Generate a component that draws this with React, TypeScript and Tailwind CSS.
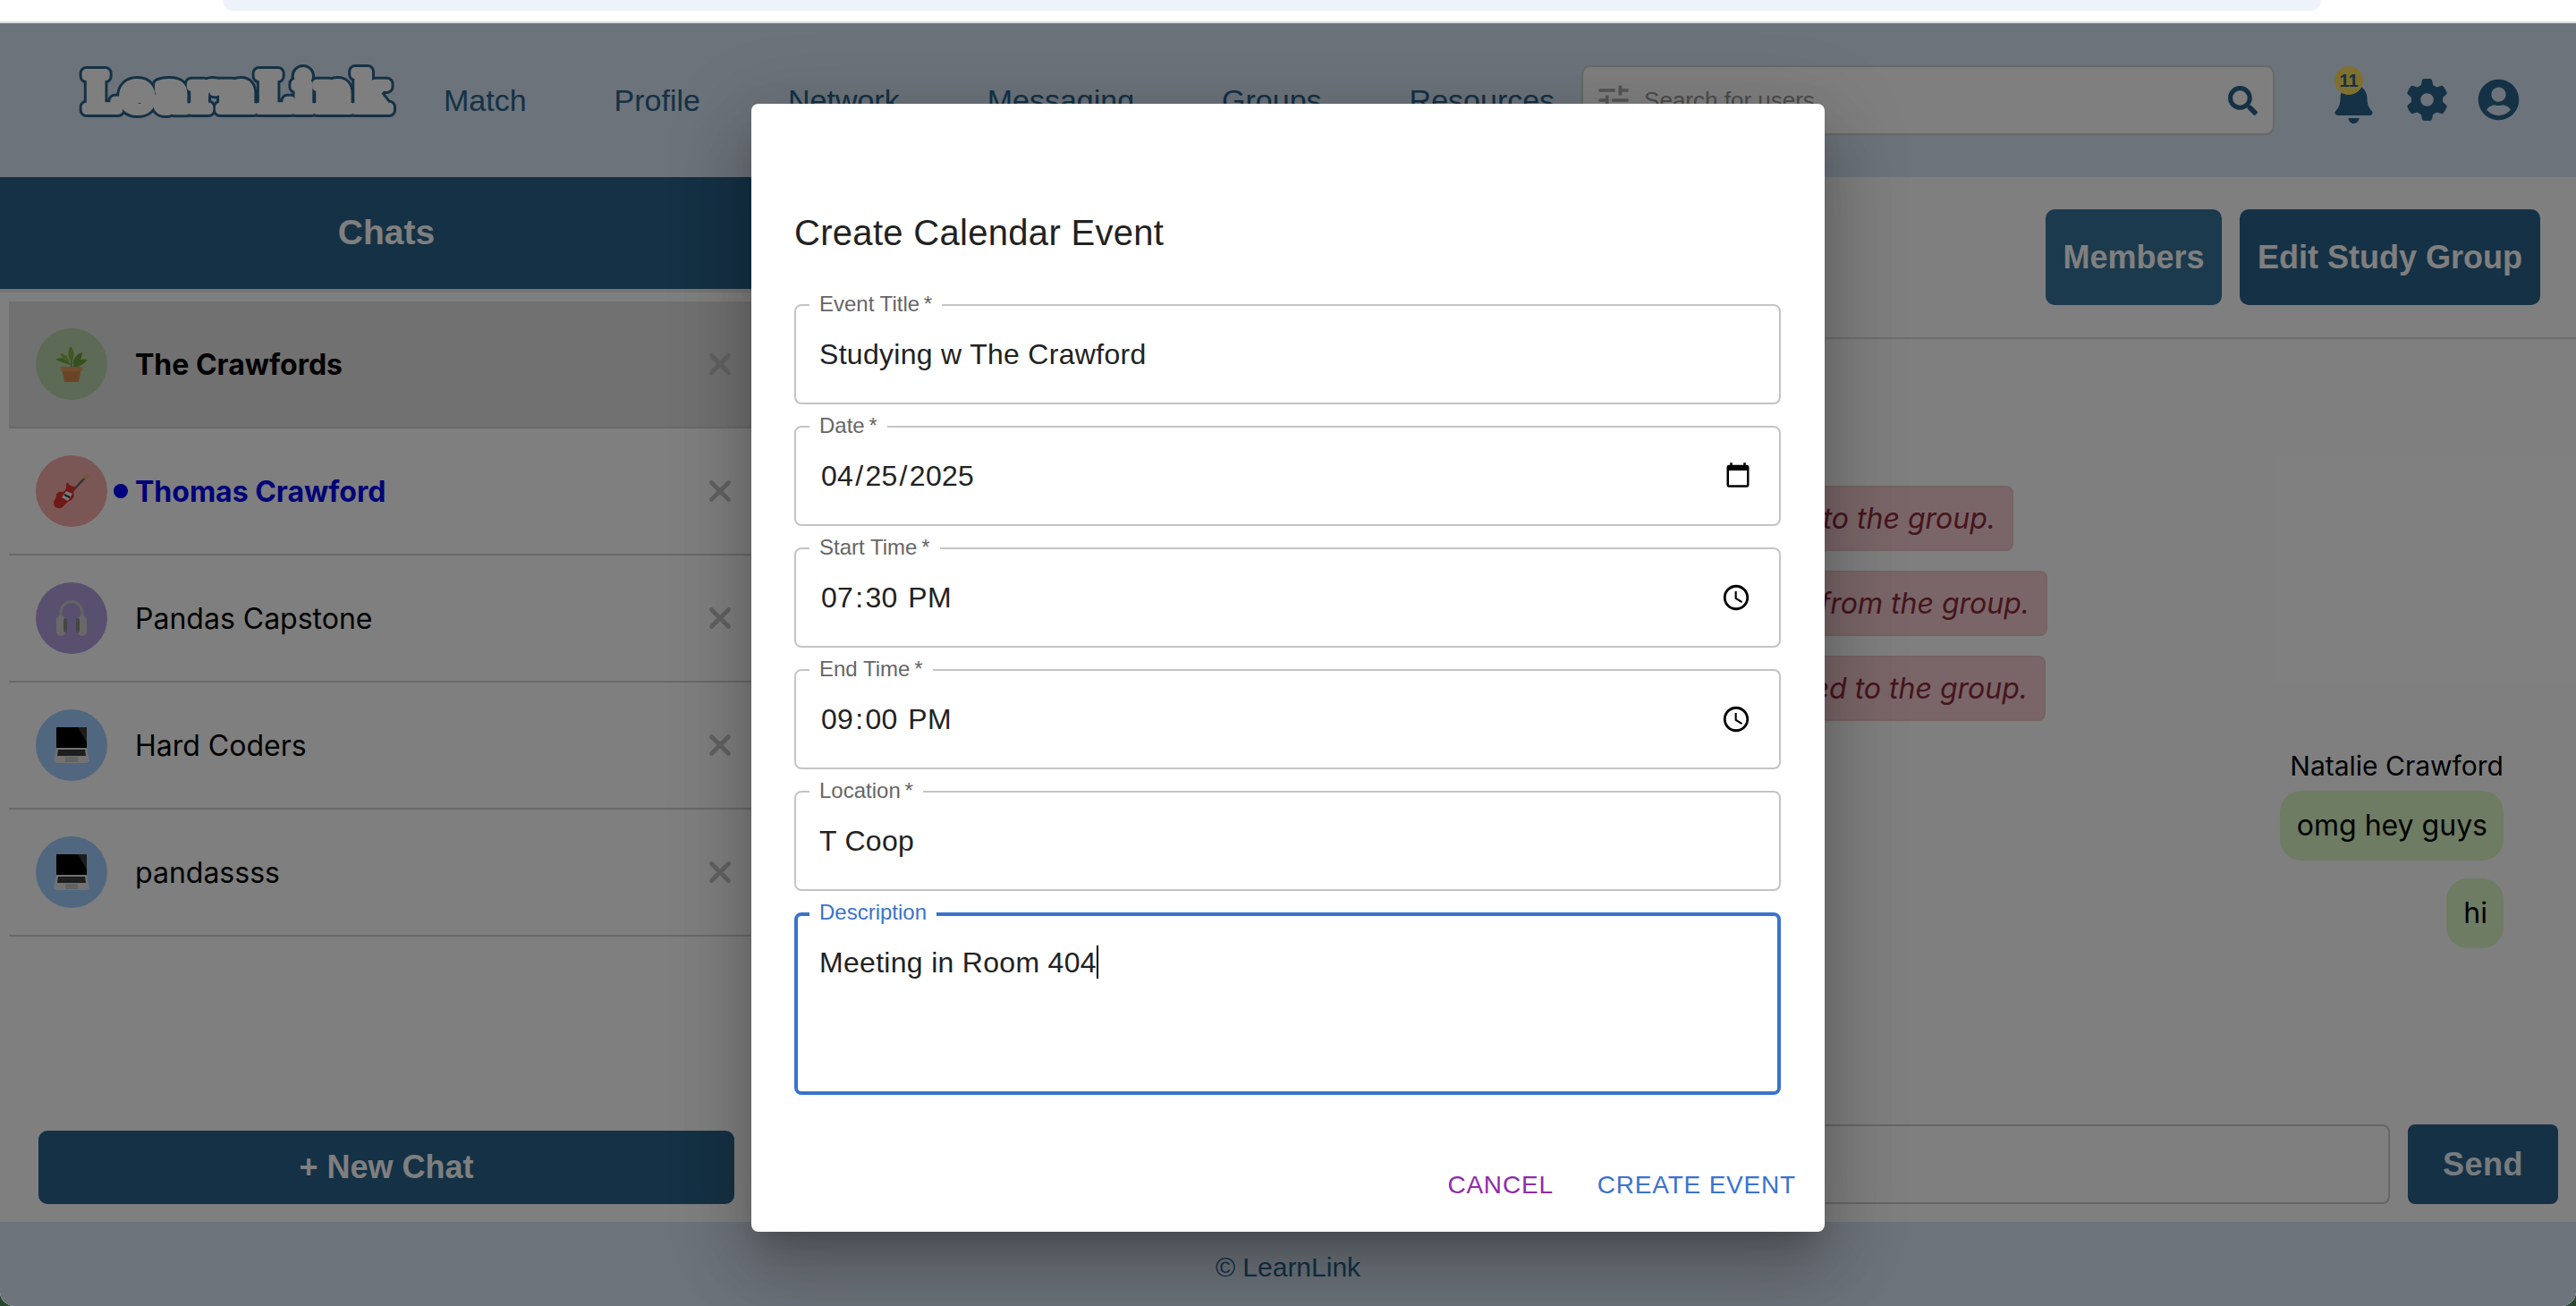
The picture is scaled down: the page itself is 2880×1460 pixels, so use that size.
import { FaBell, FaSearch, FaUserCircle } from "react-icons/fa";
import { FaGear } from "react-icons/fa6";
import { MdTune } from "react-icons/md";
import { X } from "lucide-react";

const NAV_ITEMS = ["Match", "Profile", "Network", "Messaging", "Groups", "Resources"];

const PlantIcon = () => (
  <svg viewBox="0 0 36 40" className="h-[40px] w-[36px]">
    <path d="M18 25 C17 18 18 12 19 6" stroke="#4f7a2b" strokeWidth="1.2" fill="none" />
    <path d="M18 17 C13 14 14 5 17 0 C21 5 22 12 18 17Z" fill="#7fae46" />
    <path d="M19 20 C20 13 25 8 30 7 C30 14 26 19 19 20Z" fill="#6f9f3c" />
    <path d="M17 21 C12 20 7 18 0 15 C6 11 14 14 17 21Z" fill="#77a53f" />
    <path d="M19 24 C24 24 31 21 36 15 C28 13 21 17 19 24Z" fill="#6f9f3c" />
    <path d="M16 19 C11 17 7 12 5 8 C11 8 15 13 16 19Z" fill="#86b84c" />
    <path d="M7 24 H29 L26 40 H10Z" fill="#d48a4b" />
    <rect x="6" y="23" width="24" height="5" rx="1" fill="#e29b5c" />
  </svg>
);

const GuitarIcon = () => (
  <svg viewBox="0 0 40 40" className="h-[40px] w-[40px]">
    <path d="M20 21 L35 5" stroke="#666666" strokeWidth="2.5" />
    <path d="M32 5 L37 0 L40 2 L36 7Z" fill="#e0b070" />
    <path d="M15 10 C17 13 20 15 25 15 C24 18 22 20 22 22 C24 25 22 29 18 31 C14 33 13 35 10 38 C5 41 -1 38 0 32 C1 29 3 28 3 25 C3 21 7 20 10 21 C12 21 14 18 14 15 C14 13 14 12 15 10Z" fill="#e03530" />
    <path d="M14 20 L21 23 L16 31 L9 27Z" fill="#f2f2f2" />
    <path d="M12 24 L18 27" stroke="#333333" strokeWidth="2" />
  </svg>
);

const HeadphonesIcon = () => (
  <svg viewBox="0 0 36 40" className="h-[40px] w-[36px]">
    <path d="M6 20 V15 C6 -3 30 -3 30 15 V20" stroke="#c8c8c8" strokeWidth="3" fill="none" />
    <rect x="1" y="17" width="10" height="23" rx="5" fill="#d0d0d0" />
    <rect x="25" y="17" width="10" height="23" rx="5" fill="#d0d0d0" />
    <rect x="9" y="20" width="4" height="16" rx="2" fill="#8c8c8c" />
    <rect x="23" y="20" width="4" height="16" rx="2" fill="#8c8c8c" />
  </svg>
);

const LaptopIcon = () => (
  <svg viewBox="0 0 40 40" className="h-[40px] w-[40px]">
    <path d="M3 0 H37 V23 H3Z" fill="#000000" />
    <path d="M27 0 H37 V17Z" fill="#3a3a3a" />
    <path d="M3 23 H37 L40 38 L37 40 H3 L0 38Z" fill="#e4e4e4" />
    <path d="M5 25 H35 L36 32 H4Z" fill="#3c3c3c" />
    <rect x="13" y="33" width="14" height="6" fill="#c4c4c4" />
  </svg>
);

const CHATS = [
  { name: "The Crawfords", circle: "bg-[#bbd5ab]", icon: <PlantIcon />, active: true },
  { name: "Thomas Crawford", circle: "bg-[#f5aca8]", icon: <GuitarIcon />, unread: true },
  { name: "Pandas Capstone", circle: "bg-[#b2a0de]", icon: <HeadphonesIcon /> },
  { name: "Hard Coders", circle: "bg-[#a0ceff]", icon: <LaptopIcon /> },
  { name: "pandassss", circle: "bg-[#a0ceff]", icon: <LaptopIcon /> },
];

const SYSTEM_MESSAGES = [
  { text: "Natalie Crawford was added to the group.", width: "w-[758px]" },
  { text: "Pandas Capstone was removed from the group.", width: "w-[834px]" },
  { text: "Thomas Crawford was re-added to the group.", width: "w-[830px]" },
];

const fieldInput =
  "h-full w-full bg-transparent pl-[26px] pr-[28px] text-[32px] tracking-[0.3px] text-[#222222] outline-none";

const dateInput =
  "h-full w-full bg-transparent pl-[27px] pr-[28px] text-[32px] tracking-[0.3px] text-[#222222] outline-none [&::-webkit-datetime-edit-text]:px-[1px] [&::-webkit-datetime-edit-ampm-field]:ml-[1px]";

function Field({ label, children }: { label: string; children: React.ReactNode }) {
  return (
    <div className="relative h-[112px] w-[1103px] rounded-[8px] border-2 border-[#c4c4c4]">
      <span className="absolute left-[15px] top-[-16px] bg-white px-[11px] text-[24px] leading-[28px] text-[#666666]">
        {label}
        <span>&#8201;*</span>
      </span>
      {children}
    </div>
  );
}

export default function App() {
  return (
    <div className="relative h-[1460px] w-[2880px] overflow-hidden bg-[#27452a] font-['Liberation_Sans',sans-serif]">
      <div className="flex h-full flex-col overflow-hidden rounded-b-[16px] bg-white">
        {/* Browser strip */}
        <div className="flex h-[26px] shrink-0 border-b-2 border-[#d8dcdc] bg-white pl-[249px]">
          <div className="h-[12px] w-[2346px] rounded-b-[28px] bg-[#edf2fb]" />
        </div>

        {/* Header */}
        <header className="flex h-[172px] shrink-0 items-start bg-[#d8e6f4] pl-[84px]">
          <svg viewBox="0 0 360 70" className="mt-[39px] h-[70px] w-[360px] shrink-0 font-['DejaVu_Serif',serif] text-[56px] font-bold">
            <text x="10" y="58" textLength="340" lengthAdjust="spacing" fill="#2a628a" stroke="#2a628a" strokeWidth="16" strokeLinejoin="round">
              LearnLink
            </text>
            <text x="10" y="58" textLength="340" lengthAdjust="spacing" fill="#ffffff" stroke="#ffffff" strokeWidth="10" strokeLinejoin="round">
              LearnLink
            </text>
          </svg>
          <nav className="ml-[52px] mt-[66px] flex gap-[98px] text-[34px] leading-[40px] text-[#2a628a]">
            {NAV_ITEMS.map((item) => (
              <span key={item}>{item}</span>
            ))}
          </nav>
          <div className="ml-[30px] mt-[47px] flex h-[78px] w-[775px] items-center rounded-[10px] border-2 border-[#d0d0d0] bg-white pl-[12px] pr-[17px]">
            <MdTune className="h-[44px] w-[44px] text-[#aaaaaa]" />
            <span className="ml-[12px] flex-1 text-[26px] text-[#999999]">Search for users</span>
            <FaSearch className="h-[33px] w-[33px] text-[#2a628a]" />
          </div>
          <div className="relative ml-[67px] mt-[64px] text-[#2a628a]">
            <FaBell className="h-[48px] w-[43px]" />
            <span className="absolute left-[0px] top-[-16px] flex h-[32px] w-[32px] items-center justify-center rounded-full bg-[#ffe05e] text-[20px] font-bold text-[#2a628a]">
              11
            </span>
          </div>
          <FaGear className="ml-[37px] mt-[62px] h-[47px] w-[47px] text-[#2a628a]" />
          <FaUserCircle className="ml-[33px] mt-[62px] h-[47px] w-[47px] text-[#2a628a]" />
        </header>

        {/* Main */}
        <main className="flex min-h-0 flex-1">
          {/* Sidebar */}
          <aside className="flex w-[864px] shrink-0 flex-col bg-white">
            <div className="flex h-[129px] shrink-0 items-center justify-center border-b-4 border-[#ebebeb] bg-[#2a628a] text-[39px] font-bold text-white">
              Chats
            </div>
            <div className="flex flex-1 flex-col pl-[10px] pt-[10px] font-['Inter',sans-serif]">
              {CHATS.map((chat) => (
                <div
                  key={chat.name}
                  className={`flex h-[142px] items-center border-b-2 border-[#d2d2d2] pl-[30px] pr-[40px] ${chat.active ? "bg-[#e2e2e2]" : ""}`}
                >
                  <div className={`flex h-[80px] w-[80px] shrink-0 items-center justify-center overflow-hidden rounded-full ${chat.circle}`}>
                    {chat.icon}
                  </div>
                  <div className="ml-[7px] flex w-[24px] justify-start">
                    {chat.unread && <span className="h-[16px] w-[16px] rounded-full bg-[#0000ff]" />}
                  </div>
                  <span
                    className={`flex-1 pt-[2px] text-[32px] ${chat.active ? "font-bold text-black" : chat.unread ? "font-bold text-[#0000ee]" : "text-black"}`}
                  >
                    {chat.name}
                  </span>
                  <X className="h-[38px] w-[38px] text-[#c4c4c4]" strokeWidth={3} />
                </div>
              ))}
              <div className="mt-auto pb-[20px] pl-[33px] pr-[43px] font-['Liberation_Sans',sans-serif]">
                <button className="h-[82px] w-full rounded-[10px] bg-[#2a628a] text-[36px] font-bold text-white">
                  + New Chat
                </button>
              </div>
            </div>
          </aside>

          {/* Chat panel */}
          <section className="flex min-w-0 flex-1 flex-col bg-white">
            <div className="flex h-[181px] shrink-0 items-start justify-end gap-[20px] border-b-2 border-[#dcdcdc] pr-[40px] pt-[36px]">
              <button className="h-[107px] w-[197px] rounded-[10px] bg-[#36749a] text-[36px] font-bold text-white">Members</button>
              <button className="h-[107px] w-[336px] rounded-[10px] bg-[#2a628a] text-[36px] font-bold text-white">Edit Study Group</button>
            </div>
            <div className="flex flex-1 flex-col font-['Inter',sans-serif]">
              <div className="flex flex-col items-center gap-[22px] pt-[164px]">
                {SYSTEM_MESSAGES.map((m) => (
                  <div
                    key={m.text}
                    className={`flex h-[73px] items-center justify-end rounded-[8px] border-2 border-[#edc6c9] bg-[#f4cdd0] pr-[18px] text-[32px] italic text-[#8c2a3c] ${m.width}`}
                  >
                    {m.text}
                  </div>
                ))}
              </div>
              <div className="mt-[32px] flex flex-col items-end pr-[81px] text-[32px] text-black">
                <span className="text-[30px] leading-[36px]">Natalie Crawford</span>
                <div className="mt-[10px] flex h-[78px] items-center rounded-[24px] bg-[#dcf8c6] pl-[19px] pr-[18px]">omg hey guys</div>
                <div className="mt-[20px] flex h-[78px] items-center rounded-[24px] bg-[#dcf8c6] pl-[19px] pr-[18px]">hi</div>
              </div>
              <div className="mt-auto flex gap-[20px] pb-[20px] pr-[20px]">
                <div className="h-[89px] flex-1 rounded-[8px] border-2 border-[#cccccc]" />
                <button className="h-[89px] w-[168px] rounded-[8px] bg-[#2a628a] font-['Liberation_Sans',sans-serif] text-[36px] font-bold tracking-[0.5px] text-[#eef6ff]">
                  Send
                </button>
              </div>
            </div>
          </section>
        </main>

        {/* Footer */}
        <footer className="flex h-[94px] shrink-0 items-center justify-center bg-[#d8e6f4] pt-[7px] text-[30px] text-[#2a628a]">
          © LearnLink
        </footer>
      </div>

      {/* Backdrop */}
      <div className="absolute inset-x-0 bottom-0 top-[26px] rounded-b-[16px] bg-black/50" />

      {/* Dialog */}
      <div className="absolute left-[840px] top-[116px] flex h-[1261px] w-[1200px] flex-col rounded-[8px] bg-white pl-[48px] shadow-[0_22px_30px_-14px_rgba(0,0,0,0.2),0_48px_76px_6px_rgba(0,0,0,0.14),0_18px_92px_16px_rgba(0,0,0,0.12)]">
        <h2 className="mt-[121px] text-[40px] font-normal leading-[46px] tracking-[0.3px] text-[#222222]">Create Calendar Event</h2>
        <div className="mt-[57px] flex flex-col gap-[24px]">
          <Field label="Event Title">
            <input defaultValue="Studying w The Crawford" className={fieldInput} />
          </Field>
          <Field label="Date">
            <input type="date" defaultValue="2025-04-25" className={dateInput} />
          </Field>
          <Field label="Start Time">
            <input type="time" defaultValue="19:30" className={dateInput} />
          </Field>
          <Field label="End Time">
            <input type="time" defaultValue="21:00" className={dateInput} />
          </Field>
          <Field label="Location">
            <input defaultValue="T Coop" className={fieldInput} />
          </Field>
          <div className="relative h-[204px] w-[1103px] rounded-[8px] border-4 border-[#3a73cb]">
            <span className="absolute left-[13px] top-[-18px] bg-white px-[11px] text-[24px] leading-[28px] text-[#3a73cb]">
              Description
            </span>
            <textarea
              autoFocus
              defaultValue="Meeting in Room 404"
              className="h-full w-full resize-none bg-transparent pl-[24px] pr-[26px] pt-[32px] text-[32px] leading-[40px] tracking-[0.3px] text-[#222222] caret-transparent outline-none"
            />
            {/* blinking caret frozen in the visible state */}
            <span className="absolute left-[334px] top-[33px] h-[37px] w-[2px] bg-black" />
          </div>
        </div>
        <div className="mt-auto flex justify-end gap-[49px] pb-[34px] pr-[32px] text-[28px] leading-[36px] tracking-[0.8px]">
          <button className="text-[#8f2cab]">CANCEL</button>
          <button className="text-[#3a73cb]">CREATE EVENT</button>
        </div>
      </div>
    </div>
  );
}
